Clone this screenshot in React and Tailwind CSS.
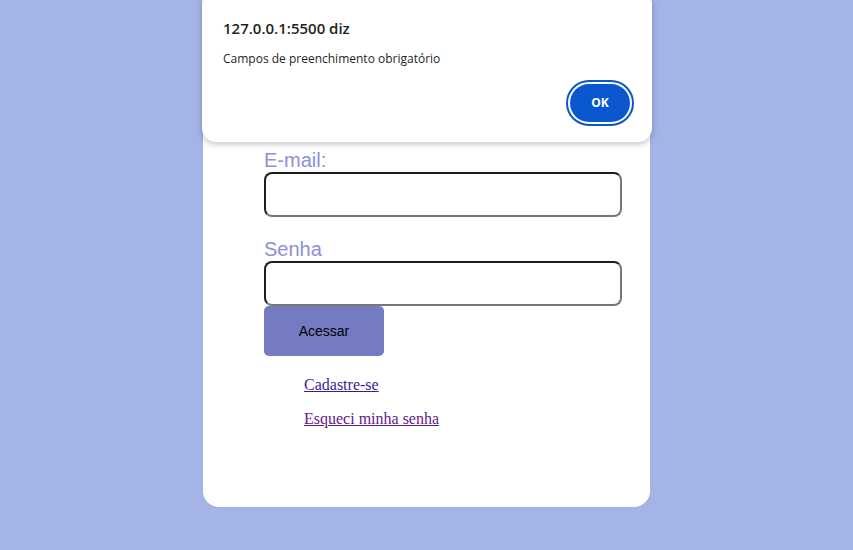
import React from 'react';

// login page with the browser alert laid over it
function AlertBox() {
  return (
    <div className="absolute left-[202px] top-[-10px] w-[450px] h-[152px] bg-white rounded-[14px] shadow-[0_2px_6px_rgba(0,0,0,0.25)] pl-[21px] pr-[18px] pt-[27px] font-['Open_Sans',sans-serif]">
      <p className="text-[15px] font-semibold text-[#1f1f1f] leading-[22px]">127.0.0.1:5500 diz</p>
      <p className="mt-[12px] text-[12px] text-[#1f1f1f] leading-[16px]">Campos de preenchimento obrigatório</p>
      <div className="flex justify-end mt-[13px]">
        <div className="rounded-full border-2 border-[#0b57d0] p-[2px]">
          <button className="w-[60px] h-[38px] rounded-full bg-[#0b57d0] text-white text-[12px] font-bold">OK</button>
        </div>
      </div>
    </div>
  );
}

export default function App() {
  return (
    <div className="relative min-h-[550px] bg-[#a4b4e6] flex justify-center overflow-hidden font-['Liberation_Sans',Arial,sans-serif]">
      <div className="mt-[20px] mb-[43px] w-[447px] bg-white rounded-[16px] pl-[61px] pr-[28px] pt-[129px] pb-[78px]">
        <label className="block text-[20px] leading-[23px] text-[#8b90d8]">E-mail:</label>
        <input type="text" className="block w-[358px] h-[45px] rounded-[8px] border-2 border-t-[#1e1e1e] border-l-[#1e1e1e] border-r-[#767676] border-b-[#767676] bg-white" />
        <label className="block mt-[21px] text-[20px] leading-[23px] text-[#8b90d8]">Senha</label>
        <input type="password" className="block w-[358px] h-[45px] rounded-[8px] border-2 border-t-[#1e1e1e] border-l-[#1e1e1e] border-r-[#767676] border-b-[#767676] bg-white" />
        <button className="block w-[120px] h-[50px] rounded-[5px] bg-[#757bc3] text-[14px] text-black">Acessar</button>
        <div className="pl-[40px] pt-[19px] font-['Liberation_Serif','Times_New_Roman',serif] text-[16px]">
          <a href="#" className="block underline text-[#3d1a9b] leading-[19px]">Cadastre-se</a>
          <a href="#" className="block mt-[15px] underline text-[#5f1a8b] leading-[19px]">Esqueci minha senha</a>
        </div>
      </div>
      <AlertBox />
    </div>
  );
}
